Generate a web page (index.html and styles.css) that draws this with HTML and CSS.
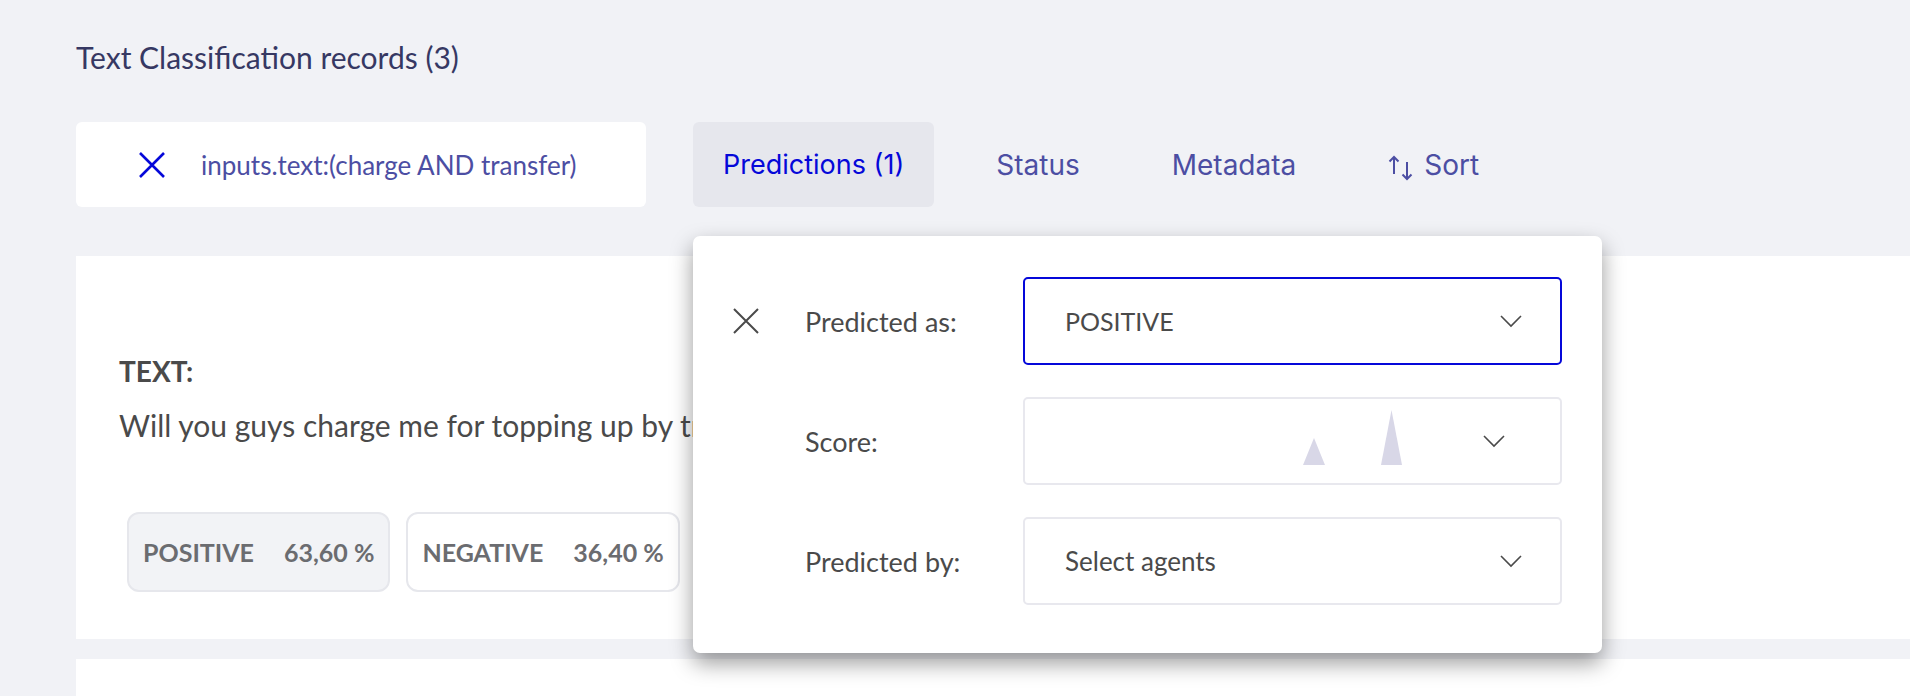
FILE: index.html
```html
<!DOCTYPE html>
<html lang="en">
<head>
<meta charset="utf-8">
<title>Text Classification records</title>
<link rel="stylesheet" href="styles.css">
</head>
<body>
<div class="page">
  <h1 class="title">Text Classification records (3)</h1>
  <div class="filters">
    <div class="search">
      <svg class="search-x" width="28" height="28" viewBox="0 0 28 28" aria-hidden="true"><path d="M2 2 L26 26 M26 2 L2 26" stroke="#0508d9" stroke-width="2.6" fill="none"/></svg>
      <span class="search-text">inputs.text:(charge AND transfer)</span>
    </div>
    <div class="tabs">
      <div class="tab-wrap">
        <button class="tab tab-active">Predictions (1)</button>
        <div class="popup">
          <div class="popup-row">
            <svg class="popup-x" width="28" height="28" viewBox="0 0 28 28" aria-hidden="true"><path d="M2 2 L26 26 M26 2 L2 26" stroke="#4a4a4a" stroke-width="2" fill="none"/></svg>
            <span class="popup-label">Predicted as:</span>
            <div class="select select-focus">
              <span class="select-value select-upper">POSITIVE</span>
              <svg class="chev" width="24" height="14" viewBox="0 0 24 14" aria-hidden="true"><path d="M2 2 L12 12 L22 2" stroke="#4a4a4a" stroke-width="1.6" fill="none"/></svg>
            </div>
          </div>
          <div class="popup-row">
            <span class="popup-x-space"></span>
            <span class="popup-label">Score:</span>
            <div class="select select-score">
              <svg class="score-chart" width="539" height="87" viewBox="0 0 539 87" aria-hidden="true">
                <polygon points="280,68 291,41 302,68" fill="#d8d7e7"/>
                <polygon points="358,68 368.5,13 379,68" fill="#d8d7e7"/>
              </svg>
              <svg class="chev" width="24" height="14" viewBox="0 0 24 14" aria-hidden="true"><path d="M2 2 L12 12 L22 2" stroke="#4a4a4a" stroke-width="1.6" fill="none"/></svg>
            </div>
          </div>
          <div class="popup-row">
            <span class="popup-x-space"></span>
            <span class="popup-label">Predicted by:</span>
            <div class="select">
              <span class="select-value">Select agents</span>
              <svg class="chev" width="24" height="14" viewBox="0 0 24 14" aria-hidden="true"><path d="M2 2 L12 12 L22 2" stroke="#4a4a4a" stroke-width="1.6" fill="none"/></svg>
            </div>
          </div>
        </div>
      </div>
      <button class="tab">Status</button>
      <button class="tab">Metadata</button>
      <button class="tab tab-sort"><svg class="sort-icon" width="26" height="26" viewBox="0 0 26 26" aria-hidden="true"><path d="M6 19 V2 M1.5 6.5 L6 2 L10.5 6.5 M19 7 V24 M14.5 19.5 L19 24 L23.5 19.5" stroke="#4c4ea3" stroke-width="2" fill="none"/></svg><span>Sort</span></button>
    </div>
  </div>
  <div class="card">
    <div class="field-label">TEXT:</div>
    <div class="field-text">Will you guys charge me for topping up by transfer?</div>
    <div class="chips">
      <div class="chip chip-selected"><span>POSITIVE</span><span>63,60 %</span></div>
      <div class="chip"><span>NEGATIVE</span><span>36,40 %</span></div>
    </div>
  </div>
  <div class="card card-next"></div>
</div>
</body>
</html>
```
FILE: styles.css
```css
* { box-sizing: border-box; }
html, body {
  margin: 0;
  padding: 0;
  background: #f1f2f6;
  overflow: hidden;
  height: 696px;
}
body {
  font-family: "Lato", "Liberation Sans", sans-serif;
  color: #4a4a4a;
}
.page {
  padding: 40px 0 0 76px;
}
.title {
  margin: 0;
  font-size: 30px;
  line-height: 34px;
  font-weight: 400;
  color: #363863;
}
.filters {
  margin-top: 48px;
  display: flex;
  align-items: stretch;
  height: 85px;
  gap: 47px;
}
.search {
  width: 570px;
  background: #fff;
  border-radius: 6px;
  display: flex;
  align-items: center;
  padding-left: 62px;
  gap: 35px;
}
.search-x { flex: none; }
.search-text {
  font-size: 26px;
  color: #4c4ea3;
}
.tabs {
  display: flex;
  gap: 32px;
}
.tab-wrap {
  position: relative;
  display: flex;
}
.tab {
  border: 0;
  background: transparent;
  font-family: "Inter", "Lato", sans-serif;
  font-size: 28px;
  color: #4c4ea3;
  padding: 0 30px;
  border-radius: 6px;
  cursor: pointer;
}
.tab-active {
  font-size: 27px;
  background: #e6e7ed;
  color: #0508d9;
}
.tab-sort {
  display: flex;
  align-items: center;
  gap: 10px;
}
.sort-icon {
  flex: none;
  margin-top: 6px;
}
.popup {
  position: absolute;
  top: calc(100% + 29px);
  left: 0;
  width: 909px;
  background: #fff;
  border-radius: 7px;
  box-shadow: 0 10px 22px rgba(0, 0, 0, 0.4);
  padding: 41px 39px 48px 39px;
  display: flex;
  flex-direction: column;
  gap: 32px;
  z-index: 10;
}
.popup-row {
  display: flex;
  align-items: center;
}
.popup-x, .popup-x-space {
  flex: none;
  width: 28px;
  height: 28px;
}
.popup-label {
  margin-left: 45px;
  width: 218px;
  font-size: 27px;
  color: #4a4a4a;
}
.select {
  position: relative;
  width: 539px;
  height: 88px;
  border: 2px solid #e8e8ee;
  border-radius: 5px;
  display: flex;
  align-items: center;
  justify-content: space-between;
  padding: 0 37px 0 40px;
}
.select-focus {
  border-color: #0508d9;
}
.select-value {
  font-size: 26px;
  color: #4a4a4a;
}
.select-upper {
  font-size: 25px;
}
.select-score {
  justify-content: flex-end;
  padding-right: 54px;
}
.score-chart {
  position: absolute;
  left: -2px;
  top: -2px;
}
.chev { flex: none; position: relative; }
.card {
  margin-top: 49px;
  height: 383px;
  background: #fff;
  padding: 98px 0 0 43px;
  white-space: nowrap;
  overflow: hidden;
}
.card-next {
  margin-top: 20px;
  padding: 0;
}
.field-label {
  font-size: 28px;
  line-height: 34px;
  font-weight: 700;
  color: #4a4a4a;
}
.field-text {
  margin-top: 20px;
  font-size: 30px;
  line-height: 34px;
  color: #4a4a4a;
}
.chips {
  margin: 70px 0 0 8px;
  display: flex;
  gap: 16px;
}
.chip {
  height: 80px;
  border: 2px solid #e6e7ec;
  border-radius: 12px;
  background: #fff;
  display: flex;
  align-items: center;
  gap: 30px;
  padding: 0 14px;
  font-size: 25px;
  font-weight: 700;
  color: #6b6c70;
}
.chip-selected {
  background: #f2f3f6;
}
```
